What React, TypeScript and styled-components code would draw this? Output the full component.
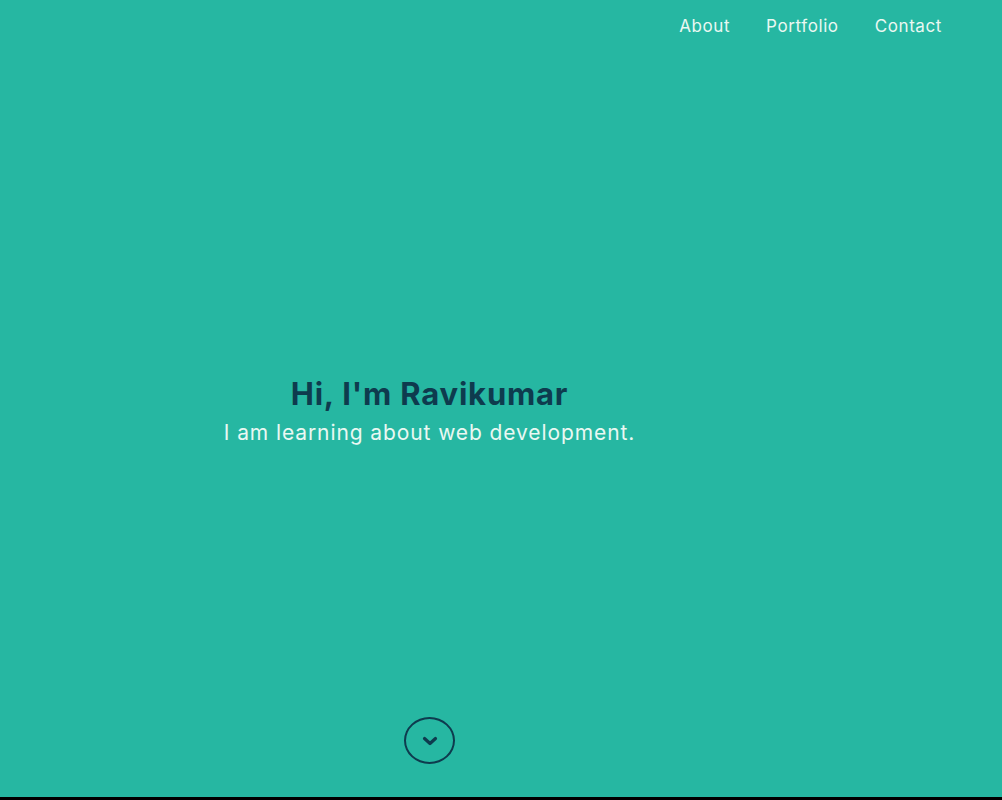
import React from "react";
import styled, { createGlobalStyle } from "styled-components";

const Global = createGlobalStyle`
  html, body { margin: 0; padding: 0; background: #000; }
  * { box-sizing: border-box; }
  body { font-family: Inter, "Noto Sans", sans-serif; }
`;

const Hero = styled.section`
  height: 797px;
  background: #26b7a2;
  display: grid;
  grid-template-rows: 50px 1fr 80px;
`;

const Nav = styled.nav`
  display: flex;
  justify-content: flex-end;
  align-items: center;
  gap: 36px;
  padding: 2px 60px 0 0;
  height: 50px;
`;

const NavLink = styled.a`
  color: #eaf8f2;
  font-size: 17px;
  font-weight: 400;
  letter-spacing: 0.6px;
  text-decoration: none;
  cursor: pointer;
`;

const Body = styled.div`
  display: grid;
  grid-template-columns: 859px 1fr;
  padding-top: 54px;
`;

const Intro = styled.div`
  display: flex;
  flex-direction: column;
  align-items: center;
  justify-content: center;
  gap: 7px;
`;

const Title = styled.h1`
  margin: 0;
  color: #0e3b4e;
  font-size: 31px;
  font-weight: 700;
  letter-spacing: 0.8px;
  line-height: 38px;
`;

const Subtitle = styled.p`
  margin: 0;
  color: #eaf8f2;
  font-size: 21px;
  letter-spacing: 0.9px;
  line-height: 26px;
`;

const Footer = styled.div`
  display: grid;
  grid-template-columns: 859px 1fr;
  align-items: start;
`;

const DownButton = styled.button`
  justify-self: center;
  width: 51px;
  height: 47px;
  border: 2.8px solid #0e3b4e;
  border-radius: 50%;
  background: transparent;
  display: flex;
  align-items: center;
  justify-content: center;
  padding: 0;
  cursor: pointer;
`;

export default function App() {
  return (
    <>
      <Global />
      <Hero>
        <Nav>
          <NavLink>About</NavLink>
          <NavLink>Portfolio</NavLink>
          <NavLink>Contact</NavLink>
        </Nav>
        <Body>
          <Intro>
            <Title>Hi, I'm Ravikumar</Title>
            <Subtitle>I am learning about web development.</Subtitle>
          </Intro>
        </Body>
        <Footer>
          <DownButton aria-label="Scroll down">
            <svg width="16" height="10" viewBox="0 0 16 10">
              <path d="M2.5 2.5 L8 7.5 L13.5 2.5" fill="none" stroke="#0e3b4e" strokeWidth="3.2" strokeLinecap="round" strokeLinejoin="round" />
            </svg>
          </DownButton>
        </Footer>
      </Hero>
    </>
  );
}
